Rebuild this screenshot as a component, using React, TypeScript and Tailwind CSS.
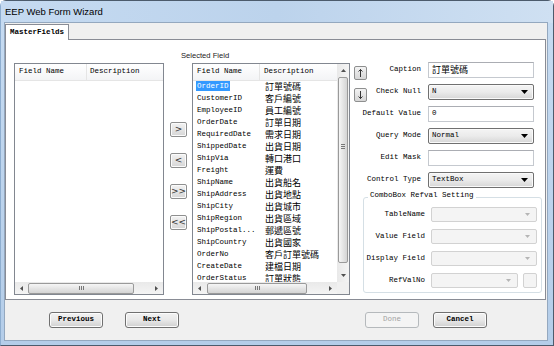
import React from 'react';

// --- Data for the "Selected Field" list ---
type FieldRow = [string, string];

const SELECTED: FieldRow[] = [
  ['OrderID', '訂單號碼'],
  ['CustomerID', '客戶編號'],
  ['EmployeeID', '員工編號'],
  ['OrderDate', '訂單日期'],
  ['RequiredDate', '需求日期'],
  ['ShippedDate', '出貨日期'],
  ['ShipVia', '轉口港口'],
  ['Freight', '運費'],
  ['ShipName', '出貨船名'],
  ['ShipAddress', '出貨地點'],
  ['ShipCity', '出貨城市'],
  ['ShipRegion', '出貨區域'],
  ['ShipPostal...', '郵遞區號'],
  ['ShipCountry', '出貨國家'],
  ['OrderNo', '客戶訂單號碼'],
  ['CreateDate', '建檔日期'],
  ['OrderStatus', '訂單狀態'],
];

const CJK = "font-['Noto_Sans_CJK_TC',sans-serif] text-[9px]";

// --- Small triangles used by scrollbars and combos ---
const Tri = ({ dir, color = '#505050', w = 5, h = 3 }: { dir: 'up' | 'down' | 'left' | 'right'; color?: string; w?: number; h?: number }) => {
  const d =
    dir === 'up' ? `M0 ${h}L${w / 2} 0L${w} ${h}Z`
    : dir === 'down' ? `M0 0L${w} 0L${w / 2} ${h}Z`
    : dir === 'left' ? `M${h} 0L0 ${w / 2}L${h} ${w}Z`
    : `M0 0L${h} ${w / 2}L0 ${w}Z`;
  const vw = dir === 'up' || dir === 'down' ? w : h;
  const vh = dir === 'up' || dir === 'down' ? h : w;
  return (
    <svg width={vw} height={vh} viewBox={`0 0 ${vw} ${vh}`}>
      <path d={d} fill={color} />
    </svg>
  );
};

// Horizontal scrollbar at the bottom of a list
const HScroll = ({ thumbLeft, thumbWidth }: { thumbLeft: number; thumbWidth: number }) => (
  <div className="h-[12px] flex-1 flex items-center bg-gradient-to-b from-[#e9e9e9] to-[#f4f4f4]">
    <div className="w-[13px] flex justify-center"><Tri dir="left" /></div>
    <div
      className="h-[11px] rounded-[2px] border border-[#9a9a9a] bg-gradient-to-b from-[#f6f6f6] to-[#d4d4d4] flex items-center justify-center gap-[1px]"
      style={{ marginLeft: thumbLeft, width: thumbWidth }}
    >
      <span className="w-px h-[4px] bg-[#777]" />
      <span className="w-px h-[4px] bg-[#777]" />
      <span className="w-px h-[4px] bg-[#777]" />
    </div>
    <div className="flex-1" />
    <div className="w-[13px] flex justify-center"><Tri dir="right" /></div>
  </div>
);

// Enabled combobox (Win7 look)
const Combo = ({ value, className = '' }: { value: string; className?: string }) => (
  <div className={`h-[16px] flex items-center rounded-[2px] border border-[#707070] bg-gradient-to-b from-[#f4f4f4] via-[#ebebeb] to-[#d6d6d6] pl-[3px] pr-[5px] shadow-[inset_0_0_0_1px_#fafafa] ${className}`}>
    <span className="flex-1 leading-none">{value}</span>
    <Tri dir="down" color="#000" w={7} h={4} />
  </div>
);

// Disabled combobox
const DisabledCombo = ({ className = '' }: { className?: string }) => (
  <div className={`h-[15px] flex items-center justify-end rounded-[2px] border border-[#d2d2d2] bg-[#f4f4f4] pr-[6px] ${className}`}>
    <Tri dir="down" color="#b5b5b5" w={5} h={3} />
  </div>
);

const TextInput = ({ children }: { children?: React.ReactNode }) => (
  <div className="h-[16px] w-[106px] flex items-center border border-[#c5c9cf] border-t-[#abadb3] bg-white pl-[3px]">
    {children}
  </div>
);

const SmallBtn = ({ children }: { children: React.ReactNode }) => (
  <div className="w-[17px] h-[15px] flex items-center justify-center rounded-[2px] border border-[#8e8f8f] bg-gradient-to-b from-[#f3f3f3] to-[#d6d6d6] shadow-[inset_0_0_0_1px_#fbfbfb] font-['DejaVu_Sans',sans-serif] text-[9px] text-[#333] leading-none">
    {children}
  </div>
);

const ArrowBtn = ({ up }: { up?: boolean }) => (
  <div className="mt-[4px] w-[13px] h-[14px] flex items-center justify-center rounded-[2px] border border-[#8e8f8f] bg-gradient-to-b from-[#f3f3f3] to-[#d6d6d6]">
    <svg width="5" height="8" viewBox="0 0 5 8">
      {up ? (
        <path d="M2.5 0.5V8M0.5 2.5L2.5 0.5L4.5 2.5" stroke="#222" strokeWidth="0.9" fill="none" />
      ) : (
        <path d="M2.5 0V7.5M0.5 5.5L2.5 7.5L4.5 5.5" stroke="#222" strokeWidth="0.9" fill="none" />
      )}
    </svg>
  </div>
);

const PushButton = ({ label, disabled }: { label: string; disabled?: boolean }) => (
  <div
    className={
      disabled
        ? 'w-[54px] h-[16px] flex items-center justify-center rounded-[3px] border border-[#b5b9bc] bg-[#f4f4f4] text-[#a3a3a3]'
        : 'w-[54px] h-[16px] flex items-center justify-center rounded-[3px] border border-[#707070] bg-gradient-to-b from-[#f2f2f2] via-[#e8e8e8] to-[#d0d0d0] shadow-[inset_0_0_0_1px_#fcfcfc] font-bold text-black'
    }
  >
    {label}
  </div>
);

// Field row of the property form
const FormRow = ({ label, children, arrow }: { label: string; children: React.ReactNode; arrow?: 'up' | 'down' }) => (
  <div className="h-[16px] flex items-center">
    <div className={`w-[67px] h-full flex items-center ${arrow ? 'justify-between' : 'justify-end'}`}>
      {arrow && <div className="self-start"><ArrowBtn up={arrow === 'up'} /></div>}
      <span className="whitespace-nowrap">{label}</span>
    </div>
    <div className="ml-[7px] w-[106px]">{children}</div>
  </div>
);

const GroupRow = ({ label, children }: { label: string; children: React.ReactNode }) => (
  <div className="h-[15px] flex items-center">
    <span className="w-[61px] text-right whitespace-nowrap">{label}</span>
    <div className="ml-[6px] flex items-center">{children}</div>
  </div>
);

export default function App() {
  return (
    <div className="w-[554px] h-[346px] bg-white font-['Liberation_Mono','Noto_Sans_CJK_TC',monospace] text-[7.5px] text-black">
      {/* --- Window frame --- */}
      <div className="w-[554px] h-[346px] flex flex-col rounded-t-[6px] border border-[#4c5b6c] border-l-[#8eaed0] bg-gradient-to-b from-[#c7dcf2] to-[#b4cde9]">
        {/* Title bar */}
        <div className="h-[22px] flex items-center pl-[4px] bg-gradient-to-r from-[#c5daf1] via-[#bcd3ec] to-[#cfe0f2] font-['Liberation_Sans',sans-serif] text-[9.5px] text-black">
          EEP Web Form Wizard
        </div>

        {/* Client area */}
        <div className="flex-1 ml-[4px] mr-[6px] mb-[5px] bg-[#f0f0f0] flex flex-col shadow-[0_0_0_1px_#94a8bf]">
          {/* Tab strip */}
          <div className="h-[16px] pt-px flex">
            <div className="relative z-10 w-[64px] h-[16px] flex items-center justify-center border border-b-0 border-[#898c95] bg-white font-bold">
              MasterFields
            </div>
          </div>

          {/* Tab page */}
          <div className="h-[261px] mr-px border border-[#898c95] bg-white flex items-start pl-[8px] pt-[9px]">
            {/* Available fields list */}
            <div className="mt-[14px] w-[150px] h-[232px] border border-[#828790] flex flex-col">
              <div className="h-[17px] flex items-stretch bg-gradient-to-b from-white to-[#f3f4f6] border-b border-[#e5e5e5]">
                <div className="w-[72px] pl-[4px] flex items-center border-r border-[#e5e5e5]">Field Name</div>
                <div className="pl-[3px] flex items-center">Description</div>
              </div>
              <div className="flex-1" />
              <div className="flex"><HScroll thumbLeft={0} thumbWidth={106} /></div>
            </div>

            {/* Move buttons */}
            <div className="ml-[6px] mt-[73px] flex flex-col gap-[16px]">
              <SmallBtn>&gt;</SmallBtn>
              <SmallBtn>&lt;</SmallBtn>
              <SmallBtn>&gt;&gt;</SmallBtn>
              <SmallBtn>&lt;&lt;</SmallBtn>
            </div>

            {/* Selected fields list */}
            <div className="ml-[5px] flex flex-col">
              <div className="h-[14px] -ml-[11px] flex items-center font-['Liberation_Sans',sans-serif] text-[7.6px] text-[#222]">
                Selected Field
              </div>
              <div className="w-[158px] h-[232px] border border-[#828790] flex flex-col">
                <div className="flex-1 flex min-h-0">
                  <div className="flex-1 overflow-hidden">
                    <div className="h-[17px] flex items-stretch bg-gradient-to-b from-white to-[#f3f4f6] border-b border-[#e5e5e5]">
                      <div className="w-[67px] pl-[4px] flex items-center border-r border-[#e5e5e5]">Field Name</div>
                      <div className="pl-[4px] flex items-center">Description</div>
                    </div>
                    {SELECTED.map(([name, desc], i) => (
                      <div key={name} className="h-[12px] flex items-center whitespace-nowrap">
                        <div className="w-[67px] pl-[3px]">
                          <span className={i === 0 ? 'px-px py-[1px] bg-[#3399ff] text-white' : 'px-px'}>{name}</span>
                        </div>
                        <div className={`pl-[5px] leading-[12px] ${CJK}`}>{desc}</div>
                      </div>
                    ))}
                  </div>
                  {/* Vertical scrollbar */}
                  <div className="w-[12px] flex flex-col bg-gradient-to-r from-[#e9e9e9] to-[#f4f4f4]">
                    <div className="h-[13px] flex items-center justify-center"><Tri dir="up" /></div>
                    <div className="h-[186px] mx-px rounded-[2px] border border-[#9a9a9a] bg-gradient-to-r from-[#f6f6f6] to-[#d4d4d4] flex flex-col items-center gap-px pt-[66px]">
                      <span className="w-[4px] h-px bg-[#777]" />
                      <span className="w-[4px] h-px bg-[#777]" />
                      <span className="w-[4px] h-px bg-[#777]" />
                    </div>
                    <div className="flex-1" />
                    <div className="h-[13px] flex items-center justify-center"><Tri dir="down" /></div>
                  </div>
                </div>
                <div className="flex">
                  <HScroll thumbLeft={1} thumbWidth={100} />
                  <div className="w-[12px] bg-[#f0f0f0]" />
                </div>
              </div>
            </div>

            {/* Field properties */}
            <div className="ml-[4px] mt-[13px] flex flex-col">
              <div className="flex flex-col gap-[6px]">
                <FormRow label="Caption" arrow="up">
                  <TextInput><span className={CJK}>訂單號碼</span></TextInput>
                </FormRow>
                <FormRow label="Check Null" arrow="down">
                  <Combo value="N" />
                </FormRow>
                <FormRow label="Default Value">
                  <TextInput>0</TextInput>
                </FormRow>
                <FormRow label="Query Mode">
                  <Combo value="Normal" />
                </FormRow>
                <FormRow label="Edit Mask">
                  <TextInput />
                </FormRow>
                <FormRow label="Control Type">
                  <Combo value="TextBox" />
                </FormRow>
              </div>

              {/* ComboBox Refval Setting group */}
              <div className="mt-[9px] ml-[9px] w-[179px] h-[96px] rounded-[3px] border border-[#d5dfe5] flex flex-col">
                <div className="-mt-[7px] ml-[4px] w-fit px-[2px] bg-white leading-[9px]">ComboBox Refval Setting</div>
                <div className="mt-[7px] flex flex-col gap-[7px]">
                  <GroupRow label="TableName"><DisabledCombo className="w-[106px]" /></GroupRow>
                  <GroupRow label="Value Field"><DisabledCombo className="w-[106px]" /></GroupRow>
                  <GroupRow label="Display Field"><DisabledCombo className="w-[106px]" /></GroupRow>
                  <GroupRow label="RefValNo">
                    <DisabledCombo className="w-[87px]" />
                    <div className="ml-[5px] w-[14px] h-[15px] rounded-[2px] border border-[#d2d2d2] bg-[#f4f4f4]" />
                  </GroupRow>
                </div>
              </div>
            </div>
          </div>

          {/* Wizard buttons */}
          <div className="flex-1 flex items-center pl-[44px]">
            <PushButton label="Previous" />
            <div className="ml-[22px]"><PushButton label="Next" /></div>
            <div className="ml-[186px]"><PushButton label="Done" disabled /></div>
            <div className="ml-[14px]"><PushButton label="Cancel" /></div>
          </div>
        </div>
      </div>
    </div>
  );
}
